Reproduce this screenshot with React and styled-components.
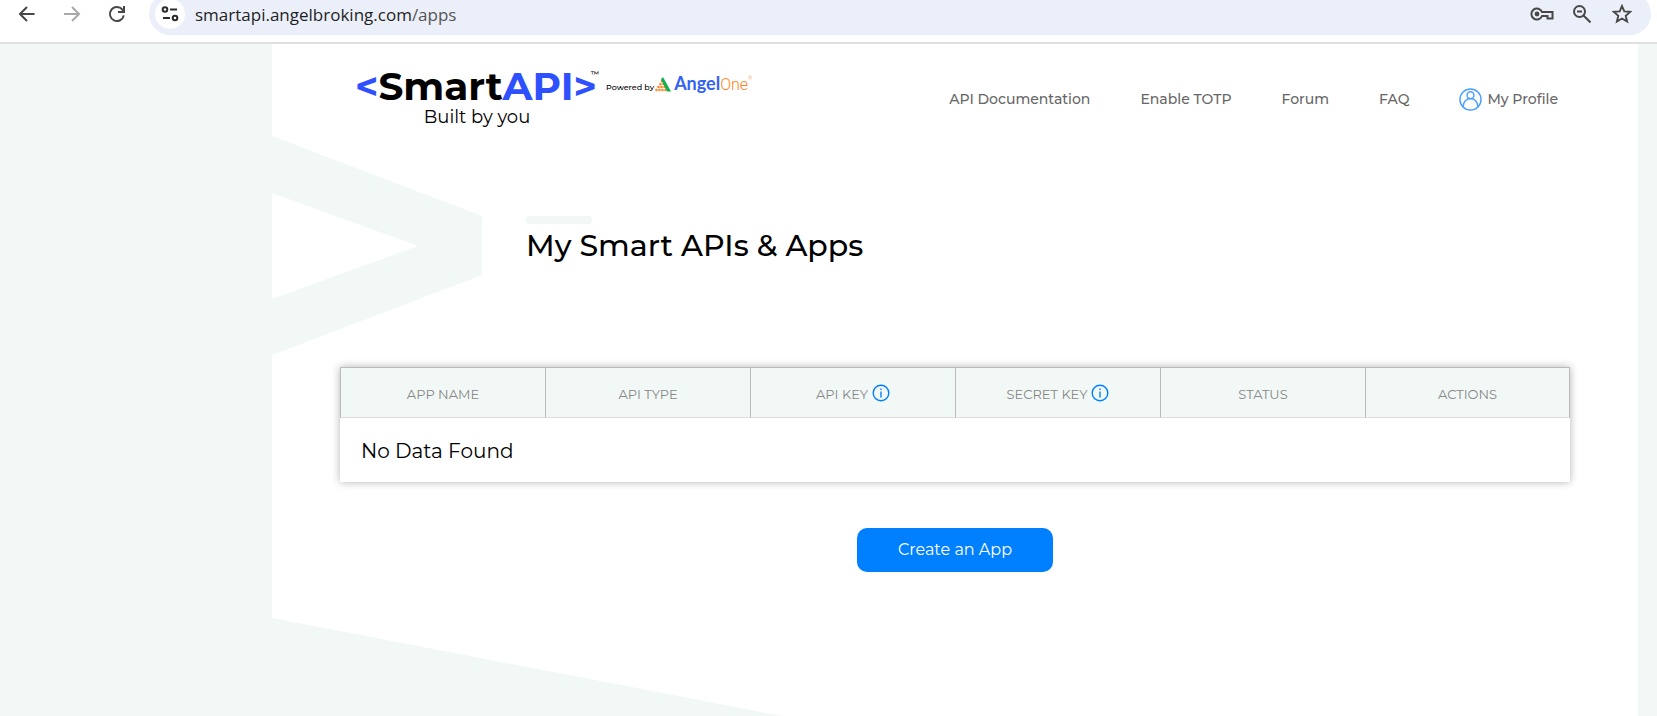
import React from "react";
import styled, { createGlobalStyle } from "styled-components";

const GlobalStyle = createGlobalStyle`
  *, *::before, *::after { box-sizing: border-box; }
  body {
    margin: 0;
    background: #f1f8f6;
    color: #000;
    font-family: Montserrat, Inter, sans-serif;
  }
`;

const Screen = styled.div`
  display: flex;
  flex-direction: column;
  min-height: 100vh;
`;

/* Browser toolbar */
const Toolbar = styled.div`
  display: flex;
  align-items: flex-end;
  height: 44px;
  padding: 0 6px 7px 4px;
  overflow: hidden;
  background: #fff;
  border-bottom: 2px solid #dfdfdf;
`;

const ToolButton = styled.button`
  display: flex;
  flex: none;
  align-items: center;
  justify-content: center;
  width: ${(p) => p.$width || 45}px;
  height: 42px;
  padding: 0;
  border: 0;
  background: none;
  color: ${(p) => (p.$faded ? "#a9a9a9" : "#474747")};
`;

const AddressBar = styled.div`
  display: flex;
  flex: 1;
  align-items: center;
  height: 42px;
  margin-left: 10px;
  padding: 0 9px 0 6px;
  border-radius: 21px;
  background: #ebeff9;
`;

const SiteInfo = styled.button`
  display: flex;
  align-items: center;
  justify-content: center;
  width: 30px;
  height: 30px;
  padding: 0;
  border: 0;
  border-radius: 50%;
  background: #fff;
  color: #2b2b2b;
`;

const Url = styled.div`
  flex: 1;
  padding: 1px 0 0 10px;
  color: #1f1f1f;
  font: 17px/24px "Open Sans", "Noto Sans", sans-serif;
`;

const UrlPath = styled.span`
  color: #555;
`;

/* Site page */
const Panel = styled.div`
  position: relative;
  isolation: isolate;
  flex: 1;
  margin: 0 19px 0 272px;
  padding: 22px 68px 64px;
  background: #fff;
`;

const Chevron = styled.svg`
  position: absolute;
  z-index: -1;
  top: 92px;
  left: 0;
  fill: #f1f8f6;
`;

const Slope = styled.svg`
  position: absolute;
  z-index: -1;
  bottom: 0;
  left: 0;
  fill: #f1f8f6;
`;

const Header = styled.header`
  display: flex;
  justify-content: space-between;
  padding: 0 12px 0 15px;
`;

const Logo = styled.a`
  display: flex;
  color: #000;
  text-decoration: none;
`;

const Brand = styled.span`
  display: flex;
  flex-direction: column;
  align-items: center;
`;

const Wordmark = styled.span`
  display: flex;
  font-size: 39px;
  font-weight: 700;
  line-height: 40px;
`;

const Blue = styled.span`
  color: #2e50ff;
`;

const Trademark = styled.sup`
  align-self: flex-start;
  padding-top: 4px;
  margin-left: -6px;
  font-size: 8px;
  font-weight: 500;
  line-height: 8px;
`;

const Tagline = styled.span`
  font-size: 18px;
  line-height: 22px;
`;

const Partner = styled.span`
  display: flex;
  align-items: center;
  height: 36px;
  padding-left: 7px;
`;

const PoweredBy = styled.span`
  padding: 6px 1px 0 0;
  font-size: 8px;
  font-weight: 500;
  line-height: 10px;
`;

const PartnerName = styled.span`
  padding-left: 3px;
  color: #3262f5;
  font-family: Lato, sans-serif;
  font-size: 18px;
  font-weight: 700;
  line-height: 20px;
`;

const Orange = styled.span`
  color: #ff8220;
  font-family: Roboto, sans-serif;
  font-size: 16px;
  font-weight: 300;
`;

const Registered = styled.sup`
  align-self: flex-start;
  padding-top: 8px;
  color: #ff8a2a;
  font-size: 5px;
  line-height: 8px;
`;

const Nav = styled.nav`
  display: flex;
  align-items: center;
  gap: 50px;
  padding-top: 4px;
`;

const NavLink = styled.a`
  display: flex;
  align-items: center;
  gap: 5px;
  color: #666;
  font-size: 14px;
  font-weight: 500;
  line-height: 24px;
  text-decoration: none;
`;

const TitleBlock = styled.div`
  padding: 88px 0 0 186px;

  &::before {
    content: "";
    display: block;
    width: 66px;
    height: 8px;
    margin-bottom: 2px;
    border-radius: 3px;
    background: #f1f8f6;
  }
`;

const Title = styled.h1`
  margin: 0;
  font-size: 30px;
  font-weight: 500;
  line-height: 40px;
`;

const AppTable = styled.table`
  width: 100%;
  margin-top: 101px;
  border-spacing: 0;
  table-layout: fixed;
  background: #fff;
  box-shadow: 0 0 8px rgba(0, 0, 0, 0.3);
`;

const HeadCell = styled.th`
  height: 51px;
  padding: 3px 0 0;
  border: 1px solid #bbb;
  border-width: 1px 0 1px 1px;
  border-bottom-color: #ddd;
  background: #f1f8f6;
  color: #888;
  font-size: 13px;
  font-weight: 400;
  line-height: 20px;

  &:last-child { border-right-width: 1px; }
`;

const HeadLabel = styled.span`
  display: flex;
  align-items: center;
  justify-content: center;
  gap: 4px;
`;

const EmptyCell = styled.td`
  height: 64px;
  padding: 1px 21px 0;
  font-size: 20px;
  line-height: 28px;
`;

const InfoButton = styled.button`
  display: flex;
  padding: 0 0 2px;
  border: 0;
  background: none;
  color: #007fff;
`;

const CreateButton = styled.button`
  display: block;
  width: 196px;
  height: 44px;
  margin: 46px auto 0;
  padding: 0;
  border: 0;
  border-radius: 10px;
  background: #007fff;
  color: #fff;
  font: 400 16px/24px Montserrat, Inter, sans-serif;
`;

const Line = ({ size = 18, width, box = "0 0 18 18", stroke = 2, children }) => (
  <svg width={width || size} height={size} viewBox={box} fill="none" stroke="currentColor" strokeWidth={stroke} aria-hidden="true">
    {children}
  </svg>
);

const Info = ({ label }) => (
  <InfoButton type="button" aria-label={label}>
    <Line stroke={1.4}>
      <circle cx="9" cy="9" r="7.8" />
      <path d="M9 7.5v6M9 4.5v1.6" />
    </Line>
  </InfoButton>
);

const COLUMNS = [
  { name: "APP NAME" },
  { name: "API TYPE" },
  { name: "API KEY", info: "About the API key" },
  { name: "SECRET KEY", info: "About the secret key" },
  { name: "STATUS" },
  { name: "ACTIONS" },
];

const LINKS = ["API Documentation", "Enable TOTP", "Forum", "FAQ"];

const DOTS = [
  [7, 4], [5.5, 7], [8.5, 7], [3.5, 10], [6.5, 10], [9.5, 10],
  [1.5, 13], [4.5, 13], [7.5, 13], [10.5, 13],
];

export default function App() {
  return (
    <Screen>
      <GlobalStyle />
      <Toolbar>
        <ToolButton type="button" aria-label="Back">
          <Line><path d="M16.5 9H2.5M9 2L2 9l7 7" /></Line>
        </ToolButton>
        <ToolButton type="button" aria-label="Forward" $faded>
          <Line><path d="M1 9h14.5M9 2l7 7-7 7" /></Line>
        </ToolButton>
        <ToolButton type="button" aria-label="Reload">
          <Line><path d="M15.8 10.4A7 7 0 1 1 14.4 4.6L16 6.5M16 1v6h-6" /></Line>
        </ToolButton>
        <AddressBar>
          <SiteInfo type="button" aria-label="Site information">
            <Line>
              <circle cx="4" cy="4.5" r="2.3" />
              <path d="M9 4.5h7M2 13h7" />
              <circle cx="14" cy="13" r="2.3" />
            </Line>
          </SiteInfo>
          <Url>smartapi.angelbroking.com<UrlPath>/apps</UrlPath></Url>
          <ToolButton type="button" aria-label="Passwords" $width={40}>
            <Line width={24} box="0 0 24 18">
              <path d="M12 7h10.5v6.5h-5V11h-5.5A5.5 5.5 0 1 1 12 7z" />
              <circle cx="7" cy="9" r="2.4" fill="currentColor" stroke="none" />
            </Line>
          </ToolButton>
          <ToolButton type="button" aria-label="Zoom" $width={40}>
            <Line><circle cx="6.5" cy="6.5" r="5.5" /><path d="M10.5 10.5l7 7M4 6.5h5" /></Line>
          </ToolButton>
          <ToolButton type="button" aria-label="Bookmark this page" $width={40}>
            <Line size={20} box="0 0 20 20" stroke={1.9}>
              <path d="M10 2l2.3 5.4 5.9.5-4.5 3.9 1.4 5.7-5.1-3-5.1 3 1.4-5.7L1.8 7.9l5.9-.5z" />
            </Line>
          </ToolButton>
        </AddressBar>
      </Toolbar>

      <Panel>
        <Chevron width="210" height="219" viewBox="0 0 210 219" aria-hidden="true">
          <path d="M0 0L210 80V139L0 219V163L146 110 0 57z" />
        </Chevron>
        <Slope width="510" height="98" viewBox="0 0 510 98" aria-hidden="true">
          <path d="M0 0L510 98H0z" />
        </Slope>

        <Header>
          <Logo href="#home">
            <Brand>
              <Wordmark>
                <Blue>&lt;</Blue>Smart<Blue>API&gt;</Blue>
                <Trademark>™</Trademark>
              </Wordmark>
              <Tagline>Built by you</Tagline>
            </Brand>
            <Partner>
              <PoweredBy>Powered by</PoweredBy>
              <svg width="16" height="15" viewBox="0 0 16 15" aria-hidden="true">
                {DOTS.map(([x, y]) => (
                  <circle key={`${x}-${y}`} cx={x} cy={y} r="1.3" fill="#ff8a2a" />
                ))}
                <path d="M6 2.5L8 0l8 14.5h-4z" fill="#12b050" />
              </svg>
              <PartnerName>Angel<Orange>One</Orange></PartnerName>
              <Registered>®</Registered>
            </Partner>
          </Logo>
          <Nav>
            {LINKS.map((text) => (
              <NavLink key={text} href="#nav">{text}</NavLink>
            ))}
            <NavLink href="#profile">
              <svg width="23" height="23" viewBox="0 0 24 24" fill="none" stroke="#4a9fff" strokeWidth="1.5" aria-hidden="true">
                <circle cx="12" cy="12" r="11" />
                <circle cx="12" cy="7.5" r="3.6" />
                <path d="M4.5 20v-1.5a7.5 7.5 0 0 1 15 0V20" />
              </svg>
              My Profile
            </NavLink>
          </Nav>
        </Header>

        <main>
          <TitleBlock>
            <Title>My Smart APIs &amp; Apps</Title>
          </TitleBlock>
          <AppTable>
            <thead>
              <tr>
                {COLUMNS.map(({ name, info }) => (
                  <HeadCell key={name} scope="col">
                    <HeadLabel>
                      {name}
                      {info && <Info label={info} />}
                    </HeadLabel>
                  </HeadCell>
                ))}
              </tr>
            </thead>
            <tbody>
              <tr>
                <EmptyCell colSpan={6}>No Data Found</EmptyCell>
              </tr>
            </tbody>
          </AppTable>
          <CreateButton type="button">Create an App</CreateButton>
        </main>
      </Panel>
    </Screen>
  );
}
